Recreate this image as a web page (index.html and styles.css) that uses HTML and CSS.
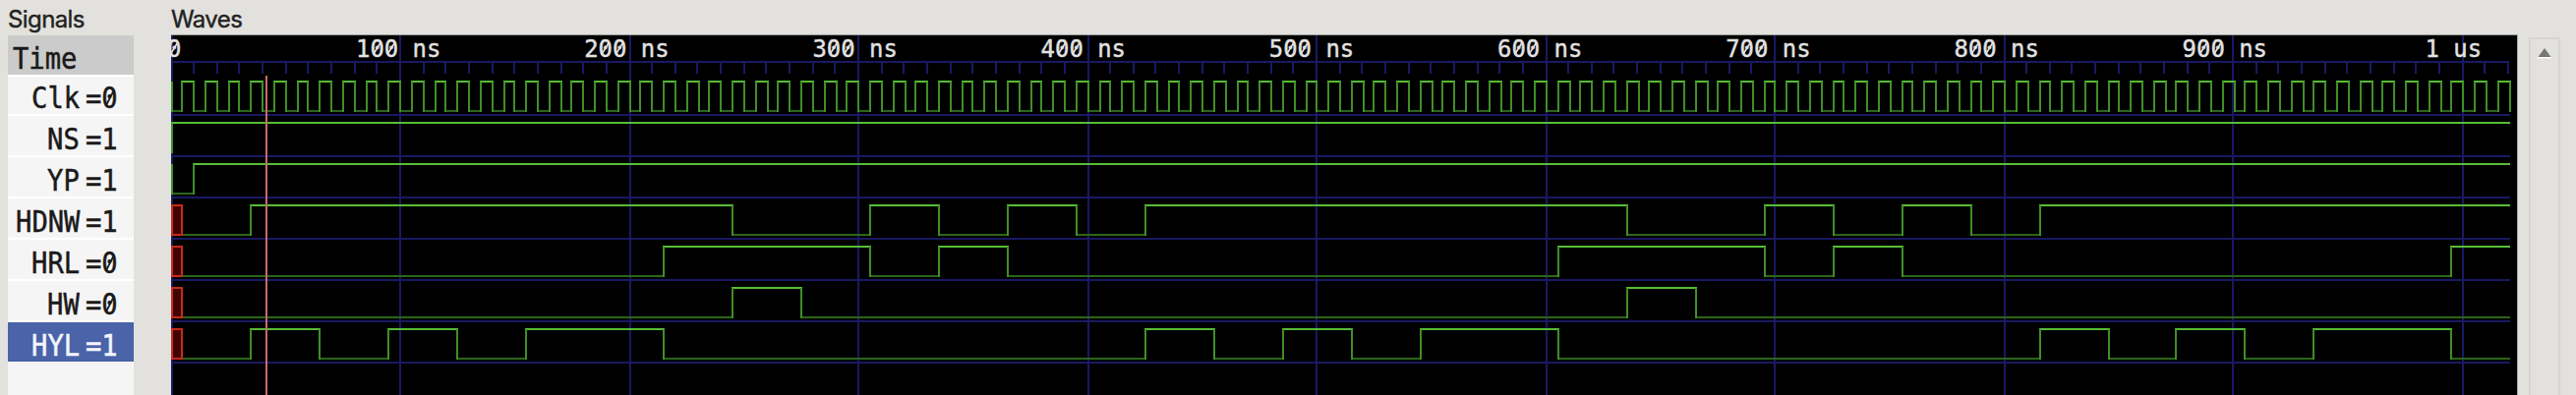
FILE: index.html
```html
<!DOCTYPE html>
<html lang="en">
<head>
<meta charset="utf-8">
<title>Waves</title>
<link rel="stylesheet" href="styles.css">
</head>
<body>
<main class="viewer">
  <section class="signals">
    <h2 class="title">Signals</h2>
    <div class="list">
      <div class="row time"><span class="name">Time</span></div>
      <div class="row first"><span class="name">Clk</span><span class="value zero">=0</span></div>
      <div class="row"><span class="name">NS</span><span class="value">=1</span></div>
      <div class="row"><span class="name">YP</span><span class="value">=1</span></div>
      <div class="row"><span class="name">HDNW</span><span class="value">=1</span></div>
      <div class="row"><span class="name">HRL</span><span class="value zero">=0</span></div>
      <div class="row"><span class="name">HW</span><span class="value zero">=0</span></div>
      <div class="row selected"><span class="name">HYL</span><span class="value">=1</span></div>
    </div>
  </section>
  <section class="waves">
    <h2 class="title">Waves</h2>
    <svg class="canvas" id="canvas" width="2386" height="366" viewBox="174 36 2386 366"></svg>
  </section>
  <div class="scrollbar">
    <svg width="16" height="12" viewBox="0 0 16 12"><path class="arrow-light" d="M1 10h14v1.5H1z"/><path class="arrow" d="M8 1 14.5 10h-13z"/></svg>
  </div>
</main>
<script src="waves.js"></script>
</body>
</html>
```

FILE: styles.css
```css
* { box-sizing: border-box; }
body {
  margin: 0;
  background: #e2e1dd;
  overflow: hidden;
}
.viewer {
  display: flex;
  width: 2620px;
  height: 402px;
}
.signals {
  width: 128px;
  margin-left: 8px;
  flex: none;
}
.title {
  margin: 0;
  height: 35px;
  padding-top: 5px;
  font: 400 24px/30px Inter, "Liberation Sans", sans-serif;
  letter-spacing: -0.6px;
  color: #222;
  white-space: nowrap;
  -webkit-text-stroke: 0.4px #222;
}
.list {
  height: 366px;
  margin-top: 1px;
  background: #f5f5f5;
}
.row {
  display: flex;
  justify-content: flex-end;
  height: 42px;
  padding: 5px 15px 0 0;
  border-bottom: 2px solid #fff;
  font: 30.5px/37px "DejaVu Sans Mono", monospace;
  color: #1a1a1a;
  white-space: pre;
  -webkit-text-stroke: 0.5px currentColor;
}
.row.first { box-shadow: inset 0 2px #fff; }
.row .name {
  display: block;
  margin-right: 6px;
  transform: scaleX(0.89);
  transform-origin: 100% 50%;
}
.row .value {
  display: block;
  position: relative;
  width: 34px;
  transform: scaleX(0.89);
  transform-origin: 0 50%;
}
.zero::after {
  content: "";
  position: absolute;
  left: 26.5px;
  top: 9px;
  width: 2px;
  height: 19px;
  background: currentColor;
  transform: rotate(30deg);
}
.row.time {
  height: 40px;
  border: 0;
  justify-content: flex-start;
  padding: 5px 0 0 5px;
  background: #cbcbcb;
}
.row.time .name { transform-origin: 0 50%; }
.row.selected {
  background: #4a63a9;
  color: #f4f6fb;
  border-bottom-color: #f5f5f5;
}
.waves {
  width: 2387px;
  margin-left: 38px;
  flex: none;
}
.canvas {
  display: block;
  background: #000;
  border-top: 1px solid #999;
  border-right: 1px solid #aaa;
  box-sizing: content-box;
}
.grid { stroke: #191964; stroke-width: 2; }
.high { stroke: #57bd35; stroke-width: 2; stroke-linecap: square; }
.low { stroke: #2c651b; stroke-width: 2; stroke-linecap: square; }
.edge { stroke: #3f8f28; stroke-width: 2; }
.unknown { fill: #400400; stroke: #c62a1c; stroke-width: 2; }
.marker { stroke: #c66b6b; stroke-width: 2; }
.label {
  fill: #e2e2e2;
  stroke: #e2e2e2;
  stroke-width: 0.4;
  font: 25px "DejaVu Sans Mono", monospace;
  white-space: pre;
}
.slash { stroke: #e2e2e2; stroke-width: 1.6; }
.scrollbar {
  width: 32px;
  height: 364px;
  margin: 38px 0 0 11px;
  padding: 8px 0 0 6px;
  border: 2px solid #d5d4d0;
  border-bottom: 0;
  flex: none;
}
.scrollbar svg { display: block; }
.arrow { fill: #777; }
.arrow-light { fill: #fff; }
```

FILE: waves.js
```js
const NS = "http://www.w3.org/2000/svg";
const canvas = document.getElementById("canvas");
const END = 1020;
const CHAR = 14.4;
const tickX = t => 175 + 2 * Math.floor(t * 1.165);
const waveX = t => 175 + 2 * Math.floor(t * 1.1657);

function add(tag, attrs, text) {
  const node = document.createElementNS(NS, tag);
  for (const key in attrs) node.setAttribute(key, attrs[key]);
  if (text) node.textContent = text;
  canvas.appendChild(node);
}
const line = (cls, x1, y1, x2, y2) => add("line", { class: cls, x1, y1, x2, y2 });

// Monospaced axis label with slashed zeros.
function label(x, text) {
  add("text", { class: "label", x, y: 58, textLength: CHAR * text.length, lengthAdjust: "spacingAndGlyphs" }, text);
  [...text].forEach((ch, i) => {
    const c = x + CHAR * (i + 0.5);
    if (ch === "0") line("slash", c - 4, 55.5, c + 4, 42.5);
  });
}

const clock = [];
for (let t = 5; t <= END; t += 5) clock.push(t);

// Each signal starts low and toggles at the listed times.
const signals = [
  { toggles: clock, start: "pulse" },
  { toggles: [0], start: "pulse" },
  { toggles: [10], start: "pulse" },
  { toggles: [35, 245, 305, 335, 365, 395, 425, 635, 695, 725, 755, 785, 815], start: "x" },
  { toggles: [215, 305, 335, 365, 605, 695, 725, 755, 995], start: "x" },
  { toggles: [245, 275, 635, 665], start: "x" },
  { toggles: [35, 65, 95, 125, 155, 215, 425, 455, 485, 515, 545, 605, 815, 845, 875, 905, 935, 995], start: "x" }
];

line("grid", 174, 63, 2552, 63);
for (let t = 10; t <= END; t += 10) {
  if (t % 100) line("grid", tickX(t), 63, tickX(t), 75);
}
signals.forEach((s, i) => line("grid", 174, 117 + 42 * i, 2553, 117 + 42 * i));
for (let t = 0; t <= 1000; t += 100) line("grid", tickX(t), 36, tickX(t), 402);

signals.forEach((s, i) => {
  const hi = 83 + 42 * i, lo = 113 + 42 * i;
  let x = 175, up = false;
  const edges = [];
  if (s.start === "pulse") edges.push(175);
  for (const t of s.toggles) {
    const nx = waveX(t);
    if (nx > x) line(up ? "high" : "low", x, up ? hi : lo, nx, up ? hi : lo);
    edges.push(nx);
    x = nx;
    up = !up;
  }
  if (x < 2552) line(up ? "high" : "low", x, up ? hi : lo, 2552, up ? hi : lo);
  edges.forEach(e => line("edge", e, hi, e, lo + 1));
  if (s.start === "x") add("rect", { class: "unknown", x: 175, y: hi, width: 10, height: 30 });
});

line("marker", 271, 77, 271, 402);

label(170, "0");
for (let k = 1; k < 10; k++) label(362 + 232.2 * (k - 1), k * 100 + " ns");
label(2466.5, "1 us");
```
